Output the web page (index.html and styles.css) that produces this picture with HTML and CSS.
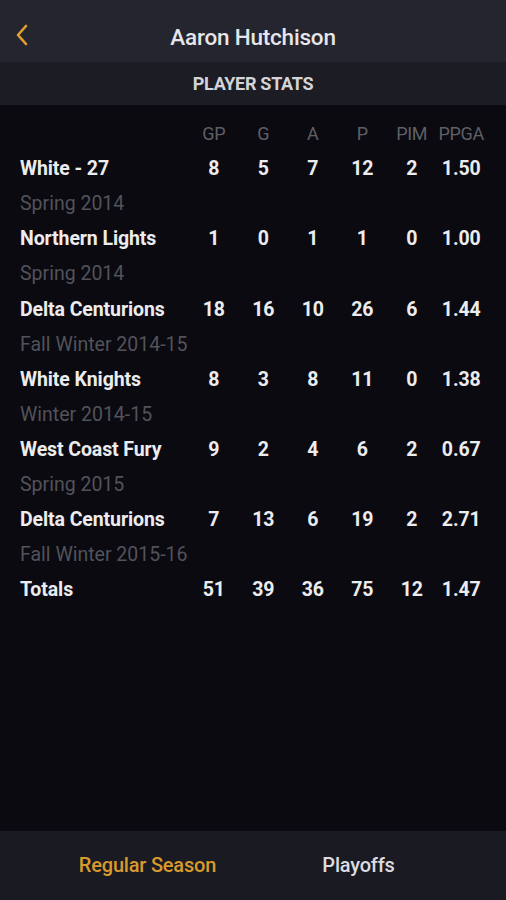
FILE: index.html
```html
<!DOCTYPE html>
<html lang="en">
  <head>
    <meta charset="UTF-8" />
    <meta name="viewport" content="width=device-width, initial-scale=1.0" />
    <title>Aaron Hutchison</title>
    <link rel="stylesheet" href="styles.css">
  </head>
  <body>
    <div class="app">
      <div class="top-bar">
        <div class="back">
          <svg width="14" height="22" viewBox="0 0 14 22">
            <path d="M11 2 L3 11 L11 20" fill="none" stroke="#e4a12e" stroke-width="2.6" stroke-linecap="round" stroke-linejoin="round" />
          </svg>
        </div>
        <div class="title">Aaron Hutchison</div>
      </div>
      <div class="sub-bar">PLAYER STATS</div>

      <div class="content">
        <div class="stats">
          <div class="row head">
            <div class="name"></div>
            <div class="num">GP</div>
            <div class="num">G</div>
            <div class="num">A</div>
            <div class="num">P</div>
            <div class="num">PIM</div>
            <div class="num">PPGA</div>
          </div>
          <div id="statRows"></div>
        </div>
      </div>

      <div class="tabs">
        <div class="tab active">Regular Season</div>
        <div class="tab">Playoffs</div>
      </div>
    </div>

    <script>
      const teams = [
        ["White - 27", "Spring 2014", 8, 5, 7, 12, 2, "1.50"],
        ["Northern Lights", "Spring 2014", 1, 0, 1, 1, 0, "1.00"],
        ["Delta Centurions", "Fall Winter 2014-15", 18, 16, 10, 26, 6, "1.44"],
        ["White Knights", "Winter 2014-15", 8, 3, 8, 11, 0, "1.38"],
        ["West Coast Fury", "Spring 2015", 9, 2, 4, 6, 2, "0.67"],
        ["Delta Centurions", "Fall Winter 2015-16", 7, 13, 6, 19, 2, "2.71"],
      ];

      const box = document.getElementById("statRows");

      function addRow(cells, cls) {
        const row = document.createElement("div");
        row.className = "row " + cls;
        cells.forEach((c, i) => {
          const cell = document.createElement("div");
          cell.className = i === 0 ? "name" : "num";
          cell.textContent = c;
          row.appendChild(cell);
        });
        box.appendChild(row);
      }

      teams.forEach((t) => {
        addRow([t[0], t[2], t[3], t[4], t[5], t[6], t[7]], "team");
        const season = document.createElement("div");
        season.className = "row season";
        season.textContent = t[1];
        box.appendChild(season);
      });

      addRow(["Totals", 51, 39, 36, 75, 12, "1.47"], "team");
    </script>
  </body>
</html>
```

FILE: styles.css
```css
body {
  margin: 0;
  padding: 0;
  font-family: Roboto, "Liberation Sans", sans-serif;
  background-color: #0a0a10;
}

.app {
  display: flex;
  flex-direction: column;
  height: 900px;
}

.top-bar {
  height: 62px;
  background-color: #25252f;
  display: flex;
  align-items: center;
  justify-content: center;
  position: relative;
}

.back {
  position: absolute;
  left: 15px;
  top: 24px;
  display: flex;
}

.title {
  color: #e6e6ea;
  font-size: 22.5px;
  font-weight: 500;
  letter-spacing: -0.2px;
  margin-top: 12px;
}

.sub-bar {
  height: 43px;
  background-color: #1c1c24;
  color: #d4d4d8;
  font-size: 18px;
  font-weight: 700;
  letter-spacing: -0.3px;
  display: flex;
  align-items: center;
  justify-content: center;
}

.content {
  flex: 1;
  padding: 11px 20px 0 20px;
}

.row {
  display: grid;
  grid-template-columns: 1fr repeat(6, 49.5px);
  align-items: center;
  height: 35.1px;
  font-size: 19.5px;
}

.row.head {
  color: #5f5f66;
  font-size: 18px;
  letter-spacing: -0.3px;
}

.row.team {
  color: #ececef;
  font-weight: 700;
  letter-spacing: -0.1px;
}

.row.season {
  display: flex;
  color: #52525a;
  font-size: 19.5px;
}

.num {
  text-align: center;
}

.tabs {
  height: 69px;
  background-color: #1a1b22;
  display: flex;
  align-items: center;
}

.tab {
  flex: 1;
  text-align: center;
  color: #dcdce0;
  font-size: 20px;
  font-weight: 500;
  letter-spacing: -0.2px;
  margin-top: -2px;
}

.tab.active {
  color: #d89a2c;
  padding-left: 42px;
}

.tab:last-child {
  padding-right: 42px;
}
```
